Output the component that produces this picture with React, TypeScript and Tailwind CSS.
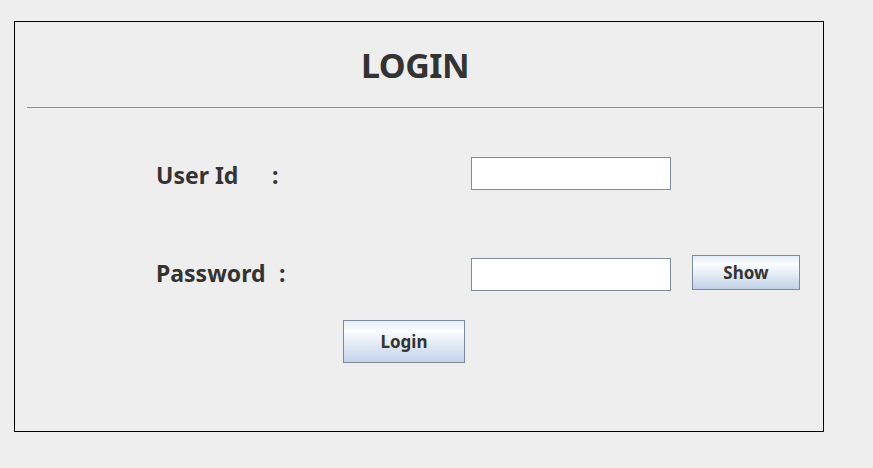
export default function App() {
  return (
    <div
      className="w-[873px] h-[468px] bg-[#eeeeee] pt-[21px] pl-[14px] text-[#333333]"
      style={{ fontFamily: '"Noto Sans", "Open Sans", sans-serif' }}
    >
      <div className="w-[810px] h-[411px] border border-black">
        {/* Title */}
        <div className="h-[85px] pt-[26px] pl-[346px]">
          <h1 className="text-[34px] leading-[35px] font-bold tracking-[-0.5px]">LOGIN</h1>
        </div>
        <div className="ml-[12px] h-px bg-[#7c8db9]" />

        {/* Form */}
        <div className="pt-[49px] pl-[141px]">
          <div className="flex items-center h-[33px]">
            <div className="w-[315px] flex items-center text-[23px] font-bold leading-none pt-[3px]">
              <span className="w-[116px]">User Id</span>
              <span>:</span>
            </div>
            <input className="w-[200px] h-[33px] bg-white border border-[#818d9b] outline-none" />
          </div>

          <div className="flex items-center h-[36px] mt-[65px]">
            <div className="w-[315px] flex items-center text-[23px] font-bold leading-none">
              <span className="w-[123px]">Password</span>
              <span>:</span>
            </div>
            <input className="w-[200px] h-[33px] self-end bg-white border border-[#818d9b] outline-none" />
            <button className="ml-[21px] w-[108px] h-[35px] self-start border border-[#7d8a9c] bg-linear-to-b from-[#e6eef8] via-[#fbfdff] via-25% to-[#c2d3e7] text-[17px] font-bold">
              Show
            </button>
          </div>

          <div className="mt-[29px] pl-[187px]">
            <button className="w-[122px] h-[43px] border border-[#7d8a9c] bg-linear-to-b from-[#e6eef8] via-[#fbfdff] via-25% to-[#c2d3e7] text-[17px] font-bold">
              Login
            </button>
          </div>
        </div>
      </div>
    </div>
  );
}
